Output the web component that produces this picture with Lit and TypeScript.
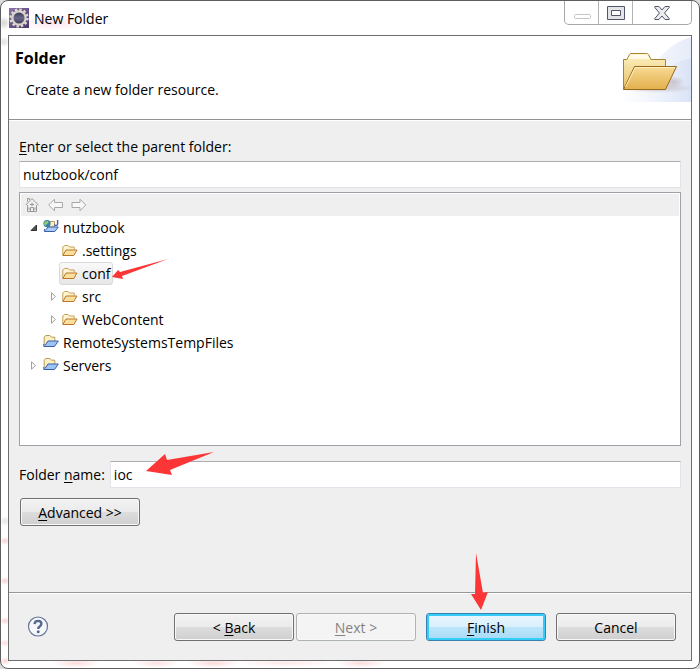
import { LitElement, html, svg, css, nothing } from "lit";
import { customElement, property, state } from "lit/decorators.js";
import { classMap } from "lit/directives/class-map.js";

interface Node {
  label: string;
  level: number;
  icon: "web" | "folder" | "project";
  twisty?: "open" | "closed";
  selected?: boolean;
}

const NODES: Node[] = [
  { label: "nutzbook", level: 0, icon: "web", twisty: "open" },
  { label: ".settings", level: 1, icon: "folder" },
  { label: "conf", level: 1, icon: "folder", selected: true },
  { label: "src", level: 1, icon: "folder", twisty: "closed" },
  { label: "WebContent", level: 1, icon: "folder", twisty: "closed" },
  { label: "RemoteSystemsTempFiles", level: 0, icon: "project" },
  { label: "Servers", level: 0, icon: "project", twisty: "closed" },
];

const folderIcon = html`<svg width="16" height="16" viewBox="0 0 16 16" aria-hidden="true">
  <path d="M.8 12V4L2.3 2.5H6L7.5 4H12.2V6.5" fill="#fdf3d0" stroke="#c8a05a" />
  <path d="M.8 12.5L4 7H15L11.8 12.5Z" fill="#fbdf9c" stroke="#b8762c" stroke-linejoin="round" />
</svg>`;

const projectIcon = html`<svg width="16" height="16" viewBox="0 0 16 16" aria-hidden="true">
  <path d="M1.2 10V2.2L2.7 .5H7L8.5 2.2H11.8V6" fill="#fdf0c0" stroke="#b69a60" />
  <path d="M.8 9V11.5H11.5L15.3 6H5L2 10.5" fill="#9cc4f4" stroke="#3a5ea8" stroke-linejoin="round" />
</svg>`;

const webIcon = html`<svg width="16" height="16" viewBox="0 0 16 16" aria-hidden="true">
  <path d="M6.5 1.5H11.5V7H6.5Z" fill="#fdf0c0" stroke="#b69a60" />
  <circle cx="4" cy="3.6" r="3.6" fill="#3d7fa8" />
  <path d="M1.6 2L4.6 .8L5.6 3L3.5 4L3 6L1 4.2Z" fill="#8fd06c" />
  <path d="M14.6 0V3.8Q14.6 5.6 12.6 5.4L11 4.8" fill="none" stroke="#3f62b0" stroke-width="1.4" />
  <path d="M1.4 9V11.5H11.8L15.3 7H5L2.4 10.5" fill="#a8ccf6" stroke="#3a5ea8" stroke-linejoin="round" />
</svg>`;

const ICONS = { folder: folderIcon, project: projectIcon, web: webIcon };

@customElement("red-pointer")
class RedPointer extends LitElement {
  @property({ type: Number }) w = 10;
  @property({ type: Number }) h = 10;
  @property() points = "";

  static styles = css`
    :host { display: block; pointer-events: none; line-height: 0; }
  `;

  render() {
    return html`<svg width=${this.w} height=${this.h} viewBox="0 0 ${this.w} ${this.h}" aria-hidden="true">
      ${svg`<polygon points=${this.points} fill="#fc3636" />`}
    </svg>`;
  }
}

@customElement("app-root")
class AppRoot extends LitElement {
  @state() private parent = "nutzbook/conf";
  @state() private folder = "ioc";

  static styles = css`
    :host {
      display: block;
      background: #dcdcdc;
      color: #000;
      font: 14px/23px "Open Sans", "Noto Sans", sans-serif;
    }
    * { box-sizing: border-box; }
    svg { display: block; flex: none; }
    u { text-decoration-thickness: 1px; text-underline-offset: 2px; }
    button, input { font: inherit; color: inherit; margin: 0; }

    .window {
      display: flex;
      flex-direction: column;
      min-height: 100vh;
      padding: 0 7px 7px;
      border: 1px solid #5e5e60;
      border-radius: 8px;
      background:
        radial-gradient(ellipse 24px 5px at 75px 662px, #fcdcdc, transparent),
        radial-gradient(ellipse 24px 5px at 155px 662px, #fde2e2, transparent),
        radial-gradient(ellipse 26px 5px at 212px 662px, #fbdada, transparent),
        radial-gradient(ellipse 50px 4px at 285px 662px, #fde8e8, transparent),
        radial-gradient(ellipse 24px 5px at 360px 662px, #fcdcdc, transparent),
        radial-gradient(ellipse 6px 5px at 4px 520px, #e6e6e6, transparent),
        radial-gradient(ellipse 6px 4px at 4px 540px, #fbcfcf, transparent),
        radial-gradient(ellipse 6px 4px at 4px 580px, #fbcfcf, transparent),
        radial-gradient(ellipse 6px 4px at 4px 620px, #fbd2d2, transparent),
        radial-gradient(ellipse 6px 4px at 4px 642px, #fcdcdc, transparent),
        radial-gradient(ellipse 6px 4px at 4px 660px, #fbd2d2, transparent),
        radial-gradient(ellipse 6px 7px at 3px 22px, #d4d4d4, transparent),
        radial-gradient(ellipse 6px 5px at 3px 41px, #dedede, transparent),
        radial-gradient(ellipse 36px 8px at 52px 22px, #fbe4f0, transparent),
        #fff;
    }

    .titlebar { display: flex; height: 34px; padding-left: 1px; }
    .title {
      flex: 1;
      display: flex;
      align-items: center;
      gap: 5px;
      margin: 0;
      font-size: 14px;
      font-weight: 400;
    }
    .controls {
      display: flex;
      height: 24px;
      border: 1px solid #a8a8a8;
      border-top: 0;
      border-radius: 0 0 5px 5px;
    }
    .control {
      display: flex;
      align-items: center;
      justify-content: center;
      width: 34px;
      padding: 0;
      border: 0;
      border-right: 1px solid #b4b4b4;
      background: none;
    }
    .control.close { width: 58px; border-right: 0; }

    .client {
      flex: 1;
      display: flex;
      flex-direction: column;
      border: 1px solid #6e6e70;
      background: #efefef;
    }
    .banner {
      display: flex;
      justify-content: space-between;
      height: 84px;
      border-bottom: 1px solid #929292;
      background: #fff;
      overflow: hidden;
    }
    .intro { padding: 11px 6px; }
    .intro h2 { margin: 0; font-size: 16px; font-weight: 700; line-height: 23px; }
    .intro p { margin: 8px 11px 0; }

    .body {
      flex: 1;
      display: flex;
      flex-direction: column;
      padding: 14px 10px;
      border-top: 1px solid #fff;
    }
    .field {
      width: 100%;
      height: 27px;
      padding: 0 3px;
      border: 1px solid #e2e3ea;
      border-top-color: #abadb3;
      border-radius: 1px;
      background: #fff;
      outline: none;
    }
    .parent { margin-top: 3px; }

    .tree {
      margin-top: 4px;
      height: 254px;
      padding: 1px;
      border: 1px solid #a0a1a8;
      background: #fff;
    }
    .toolbar {
      display: flex;
      align-items: center;
      gap: 7px;
      height: 22px;
      padding: 0 4px;
      background: #efefef;
    }
    .tool { padding: 0; border: 0; background: none; }
    .nodes { margin: 0; padding: 0 6px; list-style: none; }
    .node { display: flex; align-items: center; height: 23px; }
    .node.nested { padding-left: 20px; }
    .twisty { width: 12px; display: flex; justify-content: center; }
    .chip {
      position: relative;
      display: flex;
      align-items: center;
      gap: 4px;
      height: 23px;
      padding: 0 3px;
      border: 1px solid transparent;
      border-radius: 3px;
    }
    .nested .chip { padding: 0 2px; }
    .chip.selected {
      border-color: #d9d9d9;
      background: linear-gradient(#fafafa, #e6e6e6);
    }
    .over { position: absolute; z-index: 1; }
    .over.conf { left: 52px; top: -4px; }
    .over.name { left: 36px; top: -9px; }
    .over.finish { left: 44px; top: -61px; }

    .name-row { display: flex; align-items: center; gap: 5px; margin-top: 15px; white-space: nowrap; }
    .name-box { position: relative; flex: 1; display: flex; }

    .btn {
      position: relative;
      width: 120px;
      height: 28px;
      padding: 1px 0 0;
      border: 1px solid #707070;
      border-radius: 3px;
      background: linear-gradient(#f2f2f2, #ebebeb 49%, #dddddd 50%, #cfcfcf);
      box-shadow: inset 0 0 0 1px #f8f8f8;
      line-height: 25px;
    }
    .btn:disabled {
      border-color: #adb2b5;
      background: #f4f4f4;
      color: #838383;
    }
    .btn.default {
      border-color: #3c7fb1;
      background: linear-gradient(#eaf6fd, #d9f0fc 49%, #bee6fd 50%, #a7d9f5);
      box-shadow: inset 0 0 0 2px #35cdf8;
    }
    .advanced { margin: 10px 1px 0; }

    .footer {
      display: flex;
      align-items: center;
      gap: 10px;
      height: 68px;
      padding: 0 15px 0 18px;
      border-top: 1px solid #979797;
      box-shadow: inset 0 1px #fff;
    }
    .help { margin-right: auto; padding: 0; border: 0; background: none; }
    .pair { display: flex; gap: 2px; }
  `;

  private titleIcon() {
    return html`<svg width="20" height="20" viewBox="0 0 20 20" aria-hidden="true">
      <defs>
        <linearGradient id="sq" x1="0" y1="0" x2="1" y2="1"><stop stop-color="#8a73a8" /><stop offset="1" stop-color="#4a3868" /></linearGradient>
        <linearGradient id="orb" x2="0" y2="1"><stop stop-color="#34324c" /><stop offset=".5" stop-color="#6a6888" /><stop offset="1" stop-color="#3a3854" /></linearGradient>
      </defs>
      <rect width="20" height="20" fill="url(#sq)" />
      <circle cx="10" cy="10" r="8.4" fill="none" stroke="#e0dcd4" stroke-width="2.4" stroke-dasharray="2.4 1.998" />
      <circle cx="10" cy="10" r="6.6" fill="url(#orb)" stroke="#d8d4cc" stroke-width="2.2" />
    </svg>`;
  }

  private bannerArt() {
    return html`<svg width="72" height="66" viewBox="0 0 72 66" aria-hidden="true">
      <defs>
        <linearGradient id="sky"><stop stop-color="#fff" /><stop offset="1" stop-color="#e6ecf9" /></linearGradient>
        <linearGradient id="ray"><stop stop-color="#fff" stop-opacity="0" /><stop offset="1" stop-color="#d8e2f6" stop-opacity=".9" /></linearGradient>
        <linearGradient id="back" x2="0" y2="1"><stop stop-color="#fdf2c4" /><stop offset="1" stop-color="#e6c066" /></linearGradient>
        <linearGradient id="front" x2="0" y2="1"><stop stop-color="#f8da94" /><stop offset="1" stop-color="#e3b04c" /></linearGradient>
        <radialGradient id="shade"><stop stop-color="#a89494" stop-opacity=".5" /><stop offset="1" stop-color="#a89494" stop-opacity="0" /></radialGradient>
      </defs>
      <path d="M28 40Q46 8 72 1V66H0V57Q18 52 28 40Z" fill="url(#sky)" />
      <path d="M34 44Q50 27 72 22V66H0Z" fill="url(#ray)" />
      <ellipse cx="38" cy="52" rx="38" ry="5" fill="url(#shade)" />
      <ellipse cx="54" cy="46" rx="12" ry="6" fill="url(#shade)" />
      <path d="M4.5 53V23.5H8L10.5 18.5Q11 17.5 12 17.5H27.5Q29 17.5 29.5 18.5L32 23.5H46.5V53Z" fill="url(#back)" stroke="#a8842c" />
      <path d="M9 23L11.5 18.5H28L30.5 23Z" fill="#fffbe8" />
      <path d="M4.5 53.5L15.5 30.5H57.5L46.5 53.5Z" fill="url(#front)" stroke="#96691c" stroke-linejoin="round" />
      <path d="M6.5 51L16.2 31.6H56" fill="none" stroke="#fff0c4" />
    </svg>`;
  }

  private twisty(kind?: "open" | "closed") {
    if (!kind) return nothing;
    return html`<svg width="9" height="9" viewBox="0 0 9 9" aria-hidden="true">
      ${kind === "open"
        ? svg`<path d="M7.5 2V7.5H2Z" fill="#505050" stroke="#303030" stroke-linejoin="round" />`
        : svg`<path d="M2.5 .8L6.5 4.5L2.5 8.2Z" fill="#fff" stroke="#a0a0a0" />`}
    </svg>`;
  }

  private row(n: Node) {
    return html`<li class=${classMap({ node: true, nested: n.level > 0 })} role="treeitem"
      aria-level=${n.level + 1} aria-selected=${n.selected ? "true" : "false"}>
      <span class="twisty">${this.twisty(n.twisty)}</span>
      <span class=${classMap({ chip: true, selected: !!n.selected })}>
        ${ICONS[n.icon]}<span>${n.label}</span>
        ${n.selected
          ? html`<red-pointer class="over conf" .w=${56} .h=${20}
              points="0,18 6,11 8,13 56,0 10,17 11,20"></red-pointer>`
          : nothing}
      </span>
    </li>`;
  }

  render() {
    return html`<div class="window">
      <header class="titlebar">
        <h1 class="title">${this.titleIcon()}New Folder</h1>
        <div class="controls">
          <button class="control" aria-label="Minimize" disabled>
            <svg width="18" height="14" viewBox="0 0 18 14"><rect x="1.5" y="8.5" width="16" height="4" rx="1" fill="#fff" stroke="#c4c4c4" /></svg>
          </button>
          <button class="control" aria-label="Maximize">
            <svg width="18" height="14" viewBox="0 0 18 14"><path d="M.5 .5H17.5V13.5H.5ZM4.5 4.5V9.5H13.5V4.5Z" fill="#e4e4e6" fill-rule="evenodd" stroke="#50546a" stroke-linejoin="round" /></svg>
          </button>
          <button class="control close" aria-label="Close">
            <svg width="16" height="14" viewBox="0 0 16 14"><path d="M.8 .5H5L8 4L11 .5H15.2V1.5L10.5 7L15.2 12.5V13.5H11L8 10L5 13.5H.8V12.5L5.5 7L.8 1.5Z" fill="#ececee" stroke="#50546a" stroke-linejoin="round" /></svg>
          </button>
        </div>
      </header>
      <main class="client">
        <div class="banner">
          <div class="intro">
            <h2>Folder</h2>
            <p>Create a new folder resource.</p>
          </div>
          ${this.bannerArt()}
        </div>
        <div class="body">
          <label for="parent"><u>E</u>nter or select the parent folder:</label>
          <input class="field parent" id="parent" type="text" .value=${this.parent}
            @input=${(e: Event) => (this.parent = (e.target as HTMLInputElement).value)} />
          <div class="tree">
            <div class="toolbar">
              <button class="tool" aria-label="Home" disabled>
                <svg width="16" height="16" viewBox="0 0 16 16" fill="none" stroke="#999">
                  <path d="M.5 8.2L7 1.5L13.5 8.2M2.5 4.5V1.5H4.5V3M2.5 8V14.5H11.5V8M5.5 14V10.5H8.5V14M5 7.5H9M7 5.5V9M4 10.5V13M10 10.5V13" />
                </svg>
              </button>
              <button class="tool" aria-label="Back" disabled>
                <svg width="16" height="16" viewBox="0 0 16 16" fill="#f8f8f8" stroke="#a8a8a8">
                  <path d="M.7 8L6.5 2.2V5.5H14.5V10.5H6.5V13.8Z" stroke-linejoin="round" />
                </svg>
              </button>
              <button class="tool" aria-label="Forward" disabled>
                <svg width="16" height="16" viewBox="0 0 16 16" fill="#f8f8f8" stroke="#a8a8a8">
                  <path d="M14.8 8L9 2.2V5.5H1V10.5H9V13.8Z" stroke-linejoin="round" />
                </svg>
              </button>
            </div>
            <ul class="nodes" role="tree" aria-label="Parent folder">${NODES.map((n) => this.row(n))}</ul>
          </div>
          <div class="name-row">
            <label for="folder">Folder <u>n</u>ame:</label>
            <div class="name-box">
              <input class="field" id="folder" type="text" .value=${this.folder}
                @input=${(e: Event) => (this.folder = (e.target as HTMLInputElement).value)} />
              <red-pointer class="over name" .w=${68} .h=${24}
                points="0,19 19,2 21,8 68,0 24,18 26,23"></red-pointer>
            </div>
          </div>
          <div><button class="btn advanced"><u>A</u>dvanced &gt;&gt;</button></div>
        </div>
        <footer class="footer">
          <button class="help" aria-label="Help">
            <svg width="22" height="22" viewBox="0 0 22 22">
              <circle cx="11" cy="10.5" r="9.5" fill="#f6f8fb" stroke="#667696" stroke-width="1.2" />
              <path d="M7.6 8.1Q7.8 4.9 11.1 4.9Q14.4 5 14.4 7.8Q14.4 9.3 12.7 10.5Q11.2 11.5 11.2 13.1" fill="none" stroke="#566a90" stroke-width="2.4" />
              <circle cx="11.2" cy="15.8" r="1.5" fill="#566a90" />
            </svg>
          </button>
          <div class="pair">
            <button class="btn">&lt; <u>B</u>ack</button>
            <button class="btn" disabled><u>N</u>ext &gt;</button>
          </div>
          <button class="btn default"><u>F</u>inish
            <red-pointer class="over finish" .w=${18} .h=${57}
              points="10,57 0,41 4,41 5,0 12,40 17,39"></red-pointer>
          </button>
          <button class="btn">Cancel</button>
        </footer>
      </main>
    </div>`;
  }
}
